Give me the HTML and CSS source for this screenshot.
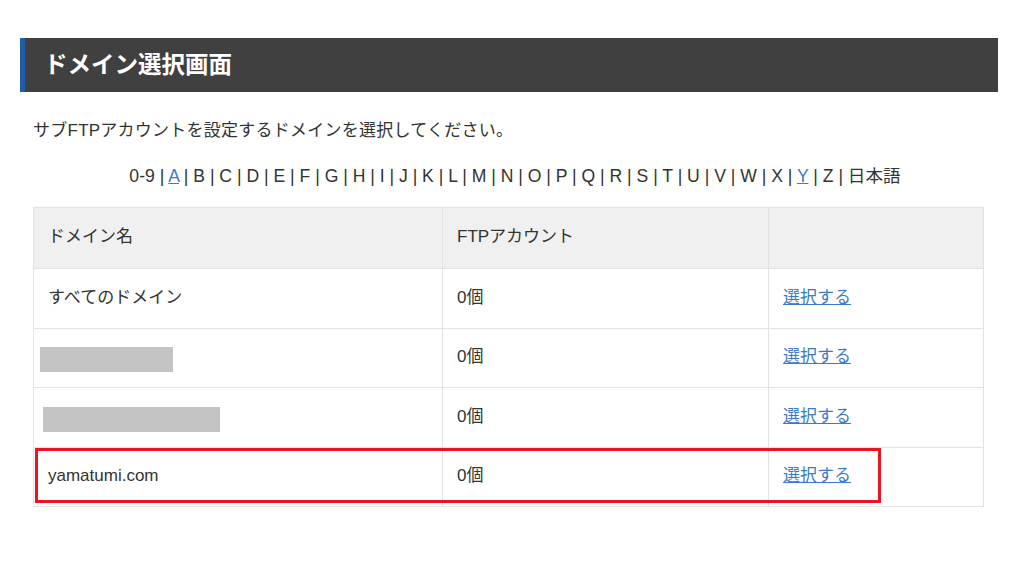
FILE: index.html
```html
<!DOCTYPE html>
<html lang="ja">
<head>
  <meta charset="UTF-8">
  <title>ドメイン選択画面</title>
  <link rel="stylesheet" href="styles.css">
</head>
<body>
  <div class="page">
    <h2 class="title">ドメイン選択画面</h2>
    <p class="lead">サブFTPアカウントを設定するドメインを選択してください。</p>
    <p class="alpha">0-9 | <a href="#">A</a> | B | C | D | E | F | G | H | I | J | K | L | M | N | O | P | Q | R | S | T | U | V | W | X | <a href="#">Y</a> | Z | 日本語</p>

    <div class="table-wrap">
      <table class="domains">
        <thead>
          <tr>
            <th class="c1">ドメイン名</th>
            <th class="c2">FTPアカウント</th>
            <th class="c3"></th>
          </tr>
        </thead>
        <tbody>
          <tr>
            <td>すべてのドメイン</td>
            <td>0個</td>
            <td><a href="#">選択する</a></td>
          </tr>
          <tr>
            <td><span class="mask mask-a"></span></td>
            <td>0個</td>
            <td><a href="#">選択する</a></td>
          </tr>
          <tr>
            <td><span class="mask mask-b"></span></td>
            <td>0個</td>
            <td><a href="#">選択する</a></td>
          </tr>
          <tr>
            <td>yamatumi.com</td>
            <td>0個</td>
            <td><a href="#">選択する</a></td>
          </tr>
        </tbody>
      </table>
      <div class="highlight"></div>
    </div>
  </div>
</body>
</html>
```

FILE: styles.css
```css
body {
  margin: 0;
  background: #ffffff;
  font-family: "Liberation Sans", "Noto Sans CJK JP", sans-serif;
  color: #333333;
  font-size: 17px;
}

.page {
  width: 978px;
  margin-left: 20px;
  padding-top: 38px;
}

.title {
  margin: 0;
  height: 54px;
  line-height: 54px;
  background: #404040;
  border-left: 5px solid #1f5fa9;
  padding-left: 19px;
  color: #ffffff;
  font-size: 23.5px;
  font-weight: bold;
}

.lead {
  margin: 27px 0 0 13px;
  line-height: 24px;
  letter-spacing: 0.25px;
}

.alpha {
  margin: 21px 0 0 13px;
  padding-left: 14px;
  width: 936px;
  line-height: 24px;
  font-size: 17.6px;
  text-align: center;
}

a {
  color: #3b7bc6;
  text-decoration: underline;
}

.table-wrap {
  position: relative;
  margin: 19px 0 0 13px;
  width: 950px;
}

.domains {
  width: 950px;
  border-collapse: collapse;
  table-layout: fixed;
}

.domains th,
.domains td {
  box-sizing: border-box;
  border: 1px solid #e3e3e3;
  text-align: left;
  font-weight: normal;
  line-height: 20px;
  padding: 0 14px 1px;
  height: 59.5px;
}

.domains th {
  background: #f0f0f0;
  height: 61px;
  padding-bottom: 2px;
}

.domains .c1 { width: 409px; }
.domains .c2 { width: 326px; }
.domains .c3 { width: 215px; }

.mask {
  display: inline-block;
  vertical-align: middle;
  margin-top: 5px;
  height: 25px;
  background: #c3c3c3;
}

.mask-a {
  width: 133px;
  margin-left: -8px;
}

.mask-b {
  width: 177px;
  margin-left: -5px;
}

.highlight {
  position: absolute;
  left: 2px;
  top: 241px;
  width: 840px;
  height: 49px;
  border: 3px solid #e8141f;
}
```
